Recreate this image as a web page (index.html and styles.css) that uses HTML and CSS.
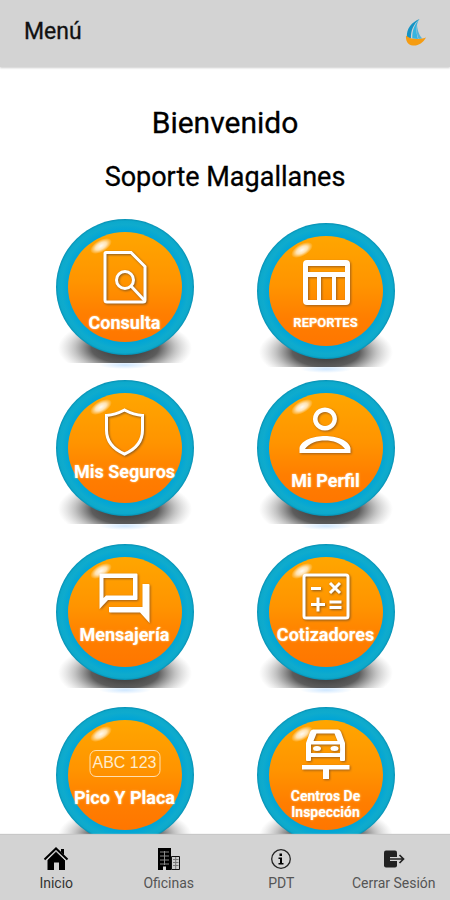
FILE: index.html
```html
<!DOCTYPE html>
<html lang="es">
<head>
<meta charset="utf-8">
<meta name="viewport" content="width=device-width, initial-scale=1">
<title>Menú</title>
<link rel="stylesheet" href="styles.css">
</head>
<body>
<svg class="defs" aria-hidden="true">
  <defs>
    <linearGradient id="orange" x1="0" y1="0" x2="0" y2="1">
      <stop offset="0" stop-color="#ffa600"/>
      <stop offset="0.45" stop-color="#ff9400"/>
      <stop offset="0.75" stop-color="#ff7e00"/>
      <stop offset="1" stop-color="#ff7600"/>
    </linearGradient>
    <radialGradient id="ring">
      <stop offset="0.82" stop-color="#00a5d6"/>
      <stop offset="0.92" stop-color="#0fabcd"/>
      <stop offset="0.97" stop-color="#0ca9cc"/>
      <stop offset="1" stop-color="#078fb2"/>
    </radialGradient>
    <radialGradient id="shade">
      <stop offset="0" stop-color="#222" stop-opacity="0.95"/>
      <stop offset="0.5" stop-color="#333" stop-opacity="0.8"/>
      <stop offset="0.75" stop-color="#555" stop-opacity="0.35"/>
      <stop offset="1" stop-color="#888" stop-opacity="0"/>
    </radialGradient>
    <radialGradient id="glow">
      <stop offset="0" stop-color="#b9dcff" stop-opacity="0.7"/>
      <stop offset="1" stop-color="#b9dcff" stop-opacity="0"/>
    </radialGradient>
    <radialGradient id="shine">
      <stop offset="0" stop-color="#fff" stop-opacity="0.95"/>
      <stop offset="0.5" stop-color="#fff" stop-opacity="0.7"/>
      <stop offset="1" stop-color="#fff" stop-opacity="0"/>
    </radialGradient>
    <clipPath id="floor"><rect x="-6" y="90" width="150" height="54"/></clipPath>
    <symbol id="disc" viewBox="0 0 138 148" overflow="visible">
      <ellipse cx="69" cy="146" rx="26" ry="4" fill="url(#glow)"/>
      <ellipse cx="69" cy="129" rx="67" ry="30" fill="url(#shade)" clip-path="url(#floor)"/>
      <ellipse cx="69" cy="68" rx="69" ry="68" fill="url(#ring)"/>
      <ellipse cx="69" cy="68" rx="57" ry="55" fill="url(#orange)"/>
      <ellipse cx="45" cy="27" rx="12" ry="6" fill="url(#shine)" transform="rotate(-30 45 27)"/>
    </symbol>
  </defs>
</svg>

<div class="app">
  <header class="bar">
    <span class="bar-title">Menú</span>
    <svg class="logo" viewBox="0 0 24 28" role="img" aria-label="Magallanes">
      <path d="M15.500 1C8 4 2 10.500 3 19.500L7 20.500C6.500 13 9.500 6 15.500 1Z" fill="#1593c4"/>
      <path d="M15.500 1C10.500 6 8 13 8.300 20.500L14 21C11.500 13 12 6 15.500 1Z" fill="#35b4e0"/>
      <path d="M13 7C13.500 13 15.500 18 18.500 20.500L14.500 21C12.500 16 12 11 13 7Z" fill="#54b4da"/>
      <path d="M2 17.500C6 21.500 14 22 22 19.500C19 25 14 28 9 27.500C3.500 27 1.500 22.500 2 17.500Z" fill="#f59c12"/>
    </svg>
  </header>

  <main class="content">
    <h1 class="welcome">Bienvenido</h1>
    <h2 class="user">Soporte Magallanes</h2>

    <div class="tiles">
      <button class="tile" type="button">
        <svg class="art" viewBox="0 -1 138 148" aria-hidden="true">
          <use href="#disc" width="138" height="148"/>
          <g class="line">
            <path d="M50 33.500H75L89 47.500V81Q89 83 87 83H51Q49 83 49 81V34.500Q49 33.500 50 33.500Z"/>
            <circle cx="69" cy="61" r="8.500"/>
            <path d="M75 67L89 82"/>
          </g>
        </svg>
        <span class="label low">Consulta</span>
      </button>

      <button class="tile" type="button">
        <svg class="art" viewBox="0 -5 138 148" aria-hidden="true">
          <use href="#disc" width="138" height="148"/>
          <path class="solid" fill-rule="evenodd" d="M50 37H89Q93 37 93 41V78Q93 82 89 82H50Q46 82 46 78V41Q46 37 50 37ZM51 43V49H88V43ZM51 54V77H60V54ZM64 54V77H75V54ZM79 54V77H88V54Z"/>
        </svg>
        <span class="label low small">REPORTES</span>
      </button>

      <button class="tile" type="button">
        <svg class="art" viewBox="0 1 138 148" aria-hidden="true">
          <use href="#disc" width="138" height="148"/>
          <g class="line">
            <path d="M68.500 30Q59 35 50.500 35.500V50C50.500 61 57 69 68.500 74C80 69 86.500 61 86.500 50V35.500Q78 35 68.500 30Z"/>
          </g>
        </svg>
        <span class="label high">Mis Seguros</span>
      </button>

      <button class="tile" type="button">
        <svg class="art" viewBox="0 1 138 148" aria-hidden="true">
          <use href="#disc" width="138" height="148"/>
          <path class="solid" fill-rule="evenodd" d="M68 27.500A12 11.500 0 1 1 67.900 27.500ZM68 32A7.500 7 0 1 0 68.100 32ZM42.500 73V68C44 60 57 56 68 56S92 60 93.500 68V73ZM48 69H88C84 63 76 60.500 68 60.500S52 63 48 69Z"/>
        </svg>
        <span class="label middle">Mi Perfil</span>
      </button>

      <button class="tile" type="button">
        <svg class="art" viewBox="0 0 138 148" aria-hidden="true">
          <use href="#disc" width="138" height="148"/>
          <path class="solid" fill-rule="evenodd" d="M44 29.500H80.500Q81.500 29.500 81.500 30.500V55Q81.500 56 80.500 56H52L43.500 65V30ZM47.500 34V54L50 51.500H77V34ZM86.500 40H92.500Q93.500 40 93.500 41V79L84 68.500H54Q53 68.500 53 67.500V63H86.500Z"/>
        </svg>
        <span class="label high">Mensajería</span>
      </button>

      <button class="tile" type="button">
        <svg class="art" viewBox="0 0 138 148" aria-hidden="true">
          <use href="#disc" width="138" height="148"/>
          <g class="line">
            <rect x="47" y="31" width="44" height="43" rx="2"/>
            <path d="M54 44.500H64M73 39L83 49M83 39L73 49M54 60.500H68M61 53.500V67.500M72.500 58H84.500M72.500 63.500H84.500"/>
          </g>
        </svg>
        <span class="label high">Cotizadores</span>
      </button>

      <button class="tile" type="button">
        <svg class="art" viewBox="0 0 138 148" aria-hidden="true">
          <use href="#disc" width="138" height="148"/>
          <rect class="plate" x="34" y="43.500" width="70" height="26" rx="6"/>
        </svg>
        <span class="plate-text">ABC 123</span>
        <span class="label high">Pico Y Placa</span>
      </button>

      <button class="tile" type="button">
        <svg class="art" viewBox="0 0 138 148" aria-hidden="true">
          <use href="#disc" width="138" height="148"/>
          <path class="solid" fill-rule="evenodd" d="M56 22.500H81Q83 22.500 84 25L88 36V53Q88 54 87 54H84Q83 54 83 53V50H54V53Q54 54 53 54H50Q49 54 49 53V36L53 25Q54 22.500 56 22.500ZM59.500 26.500L56.500 34H80.500L77.500 26.500ZM54 37.500V46H83V37.500ZM45 58H92.500V62.500H72V72H66V62.500H45Z"/>
          <g class="solid">
            <ellipse cx="60" cy="41.500" rx="4" ry="2.500"/>
            <ellipse cx="77.500" cy="41.500" rx="4" ry="2.500"/>
          </g>
        </svg>
        <span class="label high double">Centros De<br>Inspección</span>
      </button>
    </div>
  </main>

  <nav class="tabs">
    <a class="tab active" href="#inicio">
      <svg viewBox="0 0 26 24" aria-hidden="true">
        <path d="M13 4L22 13V23H16V15.500H11V23H4.500V13Z"/>
        <path d="M18 2H21V8L18 5Z"/>
        <path d="M1.500 12.500L13 1.500L24.500 12.500" fill="none" stroke="#000" stroke-width="2"/>
        <path d="M3 14L13 4.300L23 14" fill="none" stroke="#d3d3d3"/>
      </svg>
      <span>Inicio</span>
    </a>
    <a class="tab" href="#oficinas">
      <svg viewBox="0 0 26 24" aria-hidden="true">
        <path d="M2 1H15V23H2Z"/>
        <path d="M4 5H13M4 9H13M4 13H13M4 17H13M8.500 4V18" fill="none" stroke="#888"/>
        <path d="M7 19.500H10V23H7Z" fill="#d3d3d3"/>
        <path d="M15.500 9.500H23.500V22.500H15.500Z" fill="#ccc" stroke="#111"/>
        <path d="M17 12.500H22.500M17 15.500H22.500M17 18.500H22.500M19.700 10V22" fill="none" stroke="#777"/>
      </svg>
      <span>Oficinas</span>
    </a>
    <a class="tab" href="#pdt">
      <svg viewBox="0 0 26 24" aria-hidden="true">
        <circle cx="13" cy="12" r="9.300" fill="none" stroke="#222" stroke-width="1.300"/>
        <path d="M11.500 6.500H14V9H11.500ZM10.500 10.500H14V16H15.500V17.500H10.500V16H12V12H10.500Z"/>
      </svg>
      <span>PDT</span>
    </a>
    <a class="tab" href="#salir">
      <svg viewBox="0 0 26 24" aria-hidden="true">
        <rect x="3" y="3.500" width="13" height="17" rx="2" fill="#222"/>
        <path d="M9 12H22M18.500 7.500L23 12L18.500 16.500" fill="none" stroke="#d3d3d3" stroke-width="4"/>
        <path d="M9 12H22M18.500 8L22.500 12L18.500 16" fill="none" stroke="#222" stroke-width="1.700"/>
      </svg>
      <span>Cerrar Sesión</span>
    </a>
  </nav>
</div>
</body>
</html>
```
FILE: styles.css
```css
* {
  box-sizing: border-box;
}

body {
  margin: 0;
  background: #fff;
  color: #111;
  font-family: Roboto, "Liberation Sans", sans-serif;
}

.defs {
  position: absolute;
  width: 0;
  height: 0;
}

.app {
  display: flex;
  flex-direction: column;
  height: 100vh;
}

.bar {
  display: flex;
  align-items: flex-start;
  justify-content: space-between;
  padding: 18px 22px 21px 24px;
  background: #d3d3d3;
  box-shadow: 0 1px 2px #ccc;
}

.bar-title {
  font-size: 23px;
  line-height: 27px;
  font-weight: 400;
  -webkit-text-stroke: 0.3px #111;
}

.logo {
  width: 24px;
  height: 28px;
}

.content {
  flex: 1;
  min-height: 0;
  overflow: auto;
  scrollbar-width: none;
  padding: 38px 0 16px;
}

.welcome,
.user {
  margin: 0;
  text-align: center;
  font-weight: 400;
  color: #000;
  -webkit-text-stroke: 0.3px #000;
}

.welcome {
  font-size: 30px;
  line-height: 36px;
}

.user {
  margin-top: 18px;
  font-size: 27px;
  line-height: 36px;
}

.tiles {
  display: grid;
  grid-template-columns: repeat(2, 138px);
  justify-content: center;
  gap: 15px 63px;
  margin-top: 23px;
}

.tile {
  position: relative;
  display: block;
  padding: 0;
  border: 0;
  background: none;
  color: #fff;
  font-family: inherit;
  cursor: pointer;
}

.art {
  display: block;
  width: 138px;
  height: 148px;
  overflow: visible;
}

.line {
  fill: none;
  stroke: #fff;
  stroke-width: 3;
  filter: drop-shadow(1px 1px 1px #8a5a20);
}

.solid {
  fill: #fff;
  filter: drop-shadow(1px 1px 1px #a0601a);
}

.plate {
  fill: none;
  stroke: #ffe0b0;
  stroke-width: 1;
}

.label,
.plate-text {
  position: absolute;
  left: 0;
  right: 0;
  text-align: center;
  white-space: nowrap;
}

.label {
  font-size: 18px;
  line-height: 20px;
  font-weight: 700;
  text-shadow: 0 0 2px #ffd9a0;
}

.low {
  top: 95px;
}

.middle {
  top: 90px;
}

.high {
  top: 81px;
}

.small {
  font-size: 13px;
}

.double {
  font-size: 14px;
  line-height: 16px;
}

.plate-text {
  top: 46px;
  color: #ffeccc;
  font-family: "Liberation Sans Narrow", "Liberation Sans", sans-serif;
  font-size: 16px;
  line-height: 20px;
}

.tabs {
  position: relative;
  display: flex;
  padding: 12px 0 9px;
  background: #d3d3d3;
  box-shadow: 0 -1px 1px #c8c8c8;
}

.tab {
  flex: 1;
  display: flex;
  flex-direction: column;
  align-items: center;
  gap: 4px;
  color: #555;
  font-size: 14px;
  line-height: 16px;
  text-decoration: none;
  white-space: nowrap;
}

.tab svg {
  width: 26px;
  height: 24px;
}

.active {
  color: #333;
}
```
